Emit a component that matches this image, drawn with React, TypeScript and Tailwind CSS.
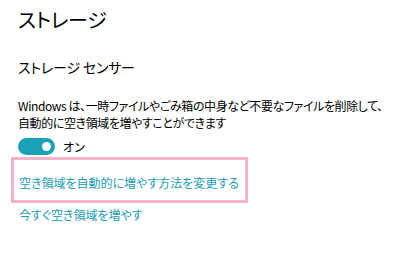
export default function App() {
  return (
    <div
      className="w-[400px] h-[266px] bg-white overflow-hidden text-black [font-feature-settings:'palt']"
      style={{ fontFamily: '"Noto Sans CJK JP", "Noto Sans", sans-serif' }}
    >
      <div className="pl-[18px] pt-[6px]">
        <h1 className="text-[20px] leading-[28px] font-normal tracking-[-0.3px]">ストレージ</h1>
        <h2 className="mt-[23px] text-[14px] leading-[20px] font-normal tracking-[-0.2px]">ストレージ センサー</h2>
        <p className="mt-[20px] text-[12px] leading-[17px] whitespace-nowrap tracking-[-0.4px]">
          Windows は、一時ファイルやごみ箱の中身など不要なファイルを削除して、
          <br />
          自動的に空き領域を増やすことができます
        </p>
        <div className="mt-[7px] flex items-center gap-[8px]">
          <div className="w-[37px] h-[17px] rounded-full bg-[#1ba1b5] flex items-center justify-end pr-[4px]">
            <div className="w-[9px] h-[9px] rounded-full bg-white" />
          </div>
          <span className="text-[12px] leading-[17px]">オン</span>
        </div>
      </div>
      <div className="ml-[11px] mt-[2px] w-[237px] h-[46px] border-[3px] border-[#f4b3cd] pl-[5px] pt-[14px]">
        <span className="text-[12px] leading-[17px] text-[#1a9cb3] block">
          空き領域を自動的に増やす方法を変更する
        </span>
      </div>
      <div className="pl-[19px] mt-[3px] text-[12px] leading-[17px] text-[#1a9cb3]">
        今すぐ空き領域を増やす
      </div>
    </div>
  );
}
